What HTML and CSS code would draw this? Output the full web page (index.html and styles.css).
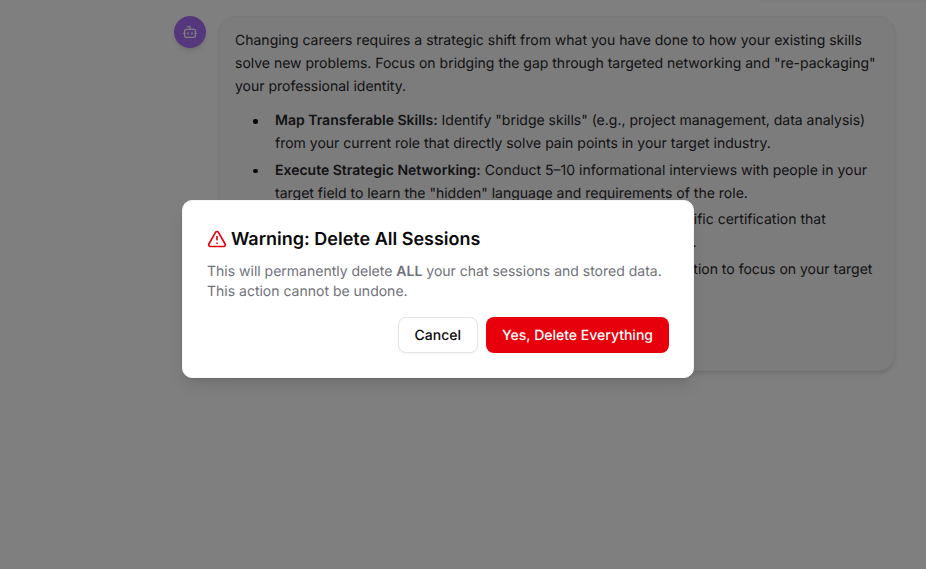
FILE: index.html
```html
<!DOCTYPE html>
<html lang="en">
<head>
<meta charset="utf-8">
<title>Delete All Sessions</title>
<link rel="stylesheet" href="styles.css">
</head>
<body>
<main class="chat">
  <div class="user-hint"></div>
  <div class="message">
    <div class="avatar">
      <svg class="avatar-icon" viewBox="0 0 24 24" width="16" height="16" fill="none" stroke="currentColor" stroke-width="2" stroke-linecap="round" stroke-linejoin="round"><path d="M12 8V4H8"/><rect width="16" height="12" x="4" y="8" rx="2"/><path d="M2 14h2"/><path d="M20 14h2"/><path d="M15 13v2"/><path d="M9 13v2"/></svg>
    </div>
    <div class="bubble">
      <p class="intro">Changing careers requires a strategic shift from what you have done to how your existing skills solve new problems. Focus on bridging the gap through targeted networking and "re-packaging" your professional identity.</p>
      <ul class="tips">
        <li><strong>Map Transferable Skills:</strong> Identify "bridge skills" (e.g., project management, data analysis) from your current role that directly solve pain points in your target industry.</li>
        <li><strong>Execute Strategic Networking:</strong> Conduct 5–10 informational interviews with people in your target field to learn the "hidden" language and requirements of the role.</li>
        <li><strong>Close Critical Skill Gaps:</strong> Take a short class or earn a role-specific certification that demonstrates your commitment and fills any missing education.</li>
        <li><strong>Rebrand Your Story:</strong> Recast your resume and LinkedIn introduction to focus on your target role rather than past titles.</li>
      </ul>
      <p class="closing">Which industry are you moving into?</p>
    </div>
  </div>
</main>
<div class="overlay">
  <div class="dialog" role="alertdialog">
    <h2 class="dialog-title">
      <svg class="warn-icon" viewBox="0 0 24 24" width="20" height="20" fill="none" stroke="currentColor" stroke-width="2" stroke-linecap="round" stroke-linejoin="round"><path d="m21.73 18-8-14a2 2 0 0 0-3.48 0l-8 14A2 2 0 0 0 4 21h16a2 2 0 0 0 1.73-3"/><path d="M12 9v4"/><path d="M12 17h.01"/></svg>
      <span>Warning: Delete All Sessions</span>
    </h2>
    <p class="dialog-text">This will permanently delete <strong>ALL</strong> your chat sessions and stored data. This action cannot be undone.</p>
    <div class="dialog-actions">
      <button class="btn btn-outline">Cancel</button>
      <button class="btn btn-danger">Yes, Delete Everything</button>
    </div>
  </div>
</div>
</body>
</html>
```

FILE: styles.css
```css
* { box-sizing: border-box; }
html, body { margin: 0; height: 100%; }
body {
  background: #fff;
  color: #0a0a0a;
  font-family: Inter, "Liberation Sans", sans-serif;
  font-size: 14px;
  line-height: 22.75px;
  overflow: hidden;
  text-rendering: geometricPrecision;
}
.chat {
  padding: 16px 31px 0 174px;
}
.user-hint {
  position: absolute;
  top: -42px;
  right: 0;
  width: 166px;
  height: 42px;
  box-shadow: 0 1px 3px rgba(0,0,0,.05);
}
.message {
  display: flex;
  gap: 13px;
  align-items: flex-start;
}
.avatar {
  flex: none;
  width: 32px;
  height: 32px;
  border-radius: 50%;
  background: #a96ff8;
  color: #fff;
  display: flex;
  align-items: center;
  justify-content: center;
  box-shadow: 0 4px 6px -1px rgba(0,0,0,.1), 0 2px 4px -2px rgba(0,0,0,.1);
}
.bubble {
  flex: 1;
  height: 355px;
  padding: 13px 15px 12px;
  border: 1px solid #f2f2f2;
  border-radius: 16px;
  background: #f8f8f8;
  color: #27272a;
  box-shadow: 0 4px 6px -1px rgba(0,0,0,.1), 0 2px 4px -2px rgba(0,0,0,.1);
}
.intro { margin: 0 0 12px; }
.tips { margin: 0 0 12px; padding-left: 40px; list-style: none; }
.tips li { position: relative; margin-bottom: 4px; }
.tips li::before {
  content: "";
  position: absolute;
  left: -22px;
  top: 9px;
  width: 4.5px;
  height: 4.5px;
  border-radius: 50%;
  background: #0a0a0a;
}
.closing { margin: 0; }
strong { font-weight: 600; }
.overlay {
  position: absolute;
  inset: 0;
  background: rgba(0,0,0,.5);
}
.dialog {
  position: absolute;
  left: 182px;
  top: 200px;
  width: 512px;
  height: 178px;
  padding: 25px 24px 24px;
  background: #fff;
  border: 1px solid #f5f5f5;
  border-radius: 10px;
  box-shadow: 0 10px 15px -3px rgba(0,0,0,.1), 0 4px 6px -4px rgba(0,0,0,.1);
}
.dialog-title {
  margin: 0;
  display: flex;
  align-items: center;
  gap: 4px;
  font-size: 18px;
  line-height: 28px;
  font-weight: 600;
}
.warn-icon { color: #e7000b; flex: none; margin-top: -2px; }
.dialog-text {
  margin: 8px 0 0;
  font-size: 14px;
  line-height: 20px;
  color: #71717a;
}
.dialog-actions {
  display: flex;
  justify-content: flex-end;
  gap: 8px;
  margin-top: 15px;
}
.btn {
  height: 36px;
  padding: 2px 16px 0;
  border-radius: 8px;
  font-family: inherit;
  font-size: 14px;
  font-weight: 500;
  line-height: 20px;
  text-rendering: inherit;
}
.btn-outline {
  background: #fff;
  color: #0a0a0a;
  border: 1px solid #e4e4e7;
  box-shadow: 0 1px 2px rgba(0,0,0,.05);
}
.btn-danger {
  background: #e7000b;
  color: #fff;
  border: 0;
}
```
